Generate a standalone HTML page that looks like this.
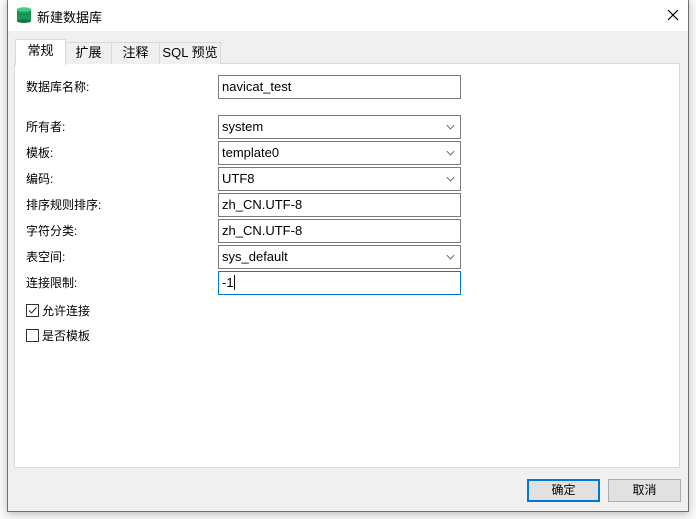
<!DOCTYPE html><html><head><meta charset="utf-8"><style>
*{box-sizing:border-box;margin:0;padding:0}
body{width:696px;height:519px;background:#fafafa;position:relative;overflow:hidden;font-family:"Liberation Sans","Microsoft YaHei","Noto Sans CJK SC",sans-serif;font-size:12px;color:#000}
.a{position:absolute}
.win{left:7px;top:-1px;width:682px;height:513px;background:#f0f0f0;border:1px solid #707070;box-shadow:0 2px 8px rgba(0,0,0,.25)}
.title{left:8px;top:0;width:680px;height:31px;background:#fff}
.tab{top:42px;height:22px;border:1px solid #d9d9d9;border-bottom:none;background:#f0f0f0;text-align:center;line-height:20px;font-size:13px}
.panel{left:14px;top:63px;width:666px;height:405px;background:#fff;border:1px solid #d9d9d9}
.lbl{left:26px;font-size:12px;line-height:24px;height:24px}
.f{left:218px;width:243px;height:24px;border:1px solid #7a7a7a;background:#fff;font-size:13px;line-height:22px;padding-left:3px}
.f .c{position:absolute;right:6px;top:6px;width:7px;height:7px;border-right:1px solid #555;border-bottom:1px solid #555;transform:rotate(45deg) scale(.8)}
.btn{top:479px;height:23px;border:1px solid #adadad;background:#e1e1e1;text-align:center;line-height:21px;font-size:12px}
.cb{left:26px;width:13px;height:13px;border:1px solid #333;background:#fff}
</style></head><body>
<div class="a win"></div>
<div class="a title"></div>
<svg class="a" style="left:17px;top:7px" width="14" height="16" viewBox="0 0 14 16"><rect x="0" y="2" width="14" height="12" fill="#1a9a55"/><ellipse cx="7" cy="14" rx="7" ry="2" fill="#137a43"/><ellipse cx="7" cy="2.5" rx="7" ry="2.3" fill="#3ecf80"/><rect x="0" y="7" width="14" height="1" fill="#168a4a"/></svg>
<div class="a" style="left:37px;top:7px;font-size:13px">新建数据库</div>
<svg class="a" style="left:667px;top:9px" width="12" height="12"><path d="M1 1L11 11M11 1L1 11" stroke="#000" stroke-width="1.2"/></svg>
<div class="a panel"></div>
<div class="a tab" style="left:65px;width:47px">扩展</div>
<div class="a tab" style="left:111px;width:49px">注释</div>
<div class="a tab" style="left:159px;width:62px">SQL 预览</div>
<div class="a tab" style="left:15px;top:39px;height:26px;width:51px;background:#fff;line-height:22px">常规</div>
<div class="a lbl" style="top:75px">数据库名称:</div>
<div class="a f" style="top:75px">navicat_test</div>
<div class="a lbl" style="top:115px">所有者:</div>
<div class="a f" style="top:115px">system<i class="c"></i></div>
<div class="a lbl" style="top:141px">模板:</div>
<div class="a f" style="top:141px">template0<i class="c"></i></div>
<div class="a lbl" style="top:167px">编码:</div>
<div class="a f" style="top:167px">UTF8<i class="c"></i></div>
<div class="a lbl" style="top:193px">排序规则排序:</div>
<div class="a f" style="top:193px">zh_CN.UTF-8</div>
<div class="a lbl" style="top:219px">字符分类:</div>
<div class="a f" style="top:219px">zh_CN.UTF-8</div>
<div class="a lbl" style="top:245px">表空间:</div>
<div class="a f" style="top:245px">sys_default<i class="c"></i></div>
<div class="a lbl" style="top:271px">连接限制:</div>
<div class="a f" style="top:271px;border-color:#0078d7">-1<span style="display:inline-block;width:1px;height:15px;background:#000;vertical-align:-3px"></span></div>
<div class="a cb" style="top:304px"><svg width="11" height="11" style="position:absolute;left:0;top:0"><path d="M2 5.5L4.5 8L9.5 2.5" stroke="#333" stroke-width="1.1" fill="none"/></svg></div>
<div class="a" style="left:42px;top:302px;font-size:12px">允许连接</div>
<div class="a cb" style="top:329px"></div>
<div class="a" style="left:42px;top:327px;font-size:12px">是否模板</div>
<div class="a btn" style="left:527px;width:73px;border:2px solid #0078d7;line-height:19px">确定</div>
<div class="a btn" style="left:608px;width:73px">取消</div>
</body></html>
